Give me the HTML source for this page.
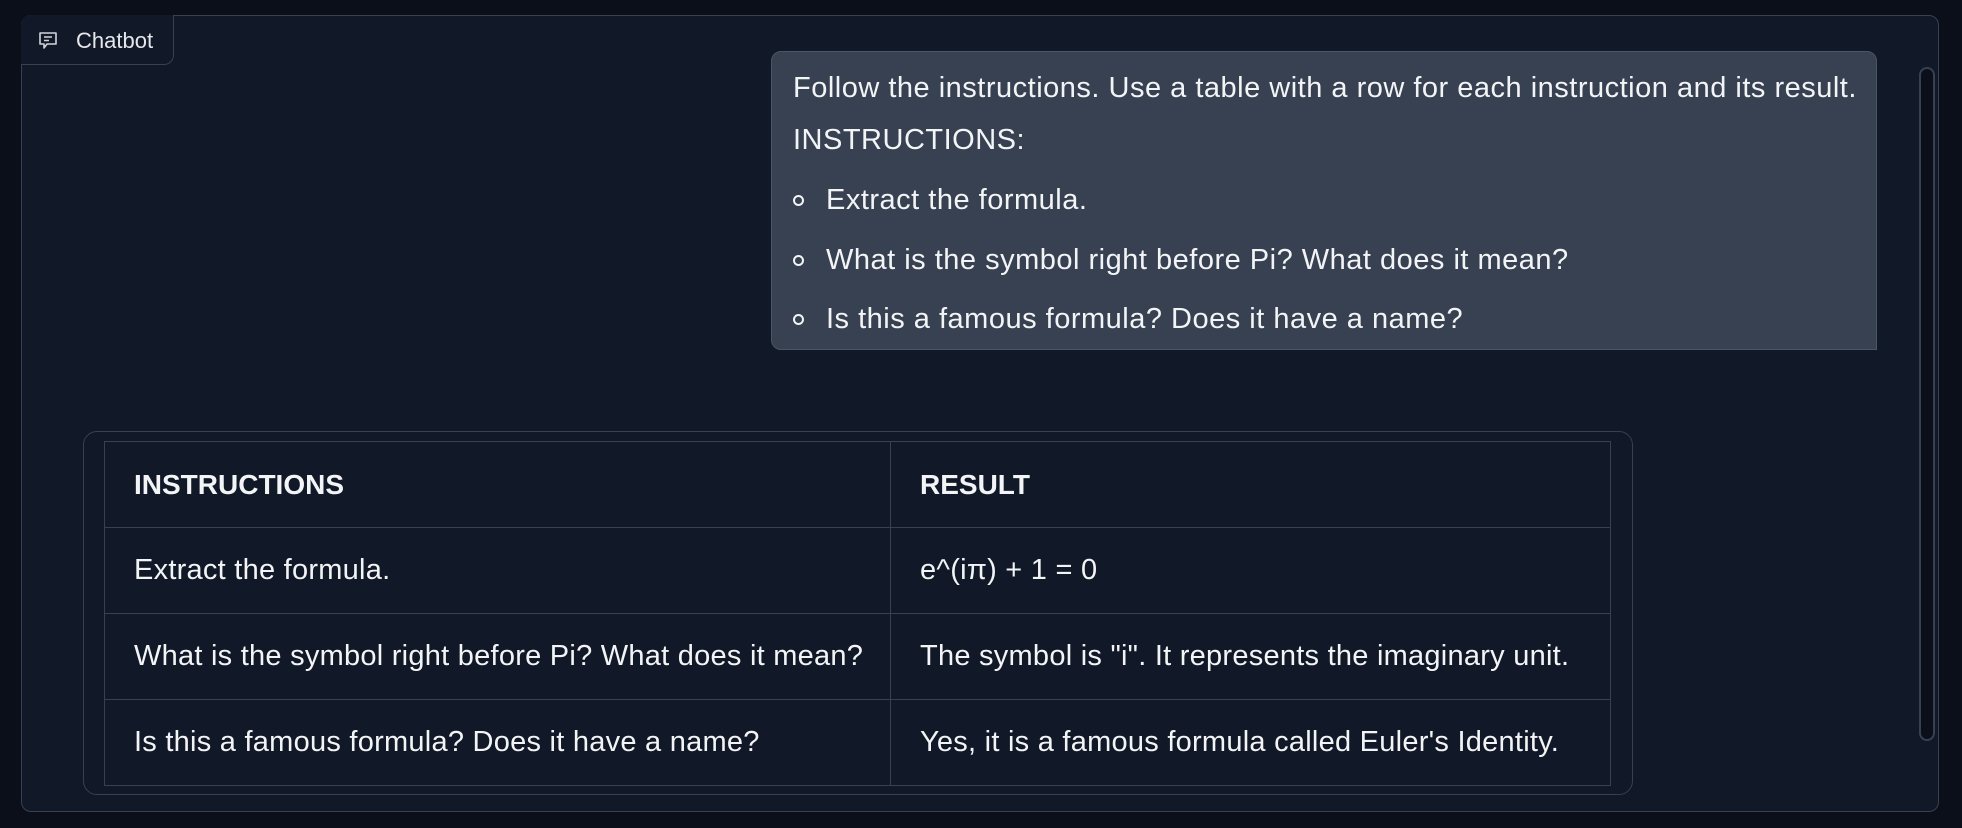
<!DOCTYPE html>
<html><head><meta charset="utf-8"><style>
*{box-sizing:border-box;margin:0;padding:0}
html,body{width:1962px;height:828px;background:#0b0f19;overflow:hidden;font-family:"Liberation Sans",sans-serif;color:#f3f4f6}
.panel{position:absolute;left:21px;top:15px;width:1918px;height:797px;background:#111827;border:1.5px solid #374151;border-radius:10px}
.label{position:absolute;left:21px;top:15px;width:153px;height:50px;border:1.5px solid #374151;border-top:none;border-left:none;border-radius:10px 0 10px 0;background:#111827}
.label svg{position:absolute;left:17px;top:17px}
.label span{position:absolute;left:55px;top:13px;font-size:22px;color:#e5e7eb}
.bubble{position:absolute;left:771px;top:51px;width:1106px;height:299px;background:#374151;border:1.5px solid #4b5563;border-radius:10px 10px 0 10px;font-size:29px;letter-spacing:0.5px;white-space:nowrap}
.bubble .l{position:absolute;left:21px;line-height:1}
.dot{position:absolute;left:21px;width:11px;height:11px;border:2px solid #f3f4f6;border-radius:50%}
.wrap{position:absolute;left:83px;top:431px;width:1550px;height:364px;border:1.5px solid #374151;border-radius:14px}
table{position:absolute;left:104px;top:441px;width:1507px;border-collapse:collapse;table-layout:fixed;font-size:29px;letter-spacing:0.25px;white-space:nowrap}
td,th{border:1.5px solid #374151;height:86px;padding:0 0 0 29px;text-align:left;vertical-align:middle;overflow:hidden}
th{font-weight:bold;letter-spacing:0;font-size:28px}
col.a{width:786px}
.sb{position:absolute;left:1919px;top:67px;width:16px;height:674px;border:2px solid #374151;border-radius:8px;background:#0b0f19}
</style></head><body>
<div class="panel"></div>
<div class="label"><svg width="20" height="17" viewBox="0 0 20 17" fill="none" stroke="#d1d5db" stroke-width="1.6"><path d="M2 1h16v11H9l-3 4v-4H2z" stroke-linejoin="round"/><path d="M6 5h8M6 8.5h5"/></svg><span>Chatbot</span></div>
<div class="bubble">
<div class="l" style="top:22px">Follow the instructions. Use a table with a row for each instruction and its result.</div>
<div class="l" style="top:74px">INSTRUCTIONS:</div>
<div class="dot" style="top:143px"></div><div class="l" style="left:54px;top:134px">Extract the formula.</div>
<div class="dot" style="top:203px"></div><div class="l" style="left:54px;top:194px">What is the symbol right before Pi? What does it mean?</div>
<div class="dot" style="top:262px"></div><div class="l" style="left:54px;top:253px">Is this a famous formula? Does it have a name?</div>
</div>
<div class="wrap"></div>
<table>
<colgroup><col class="a"><col></colgroup>
<tr><th>INSTRUCTIONS</th><th>RESULT</th></tr>
<tr><td>Extract the formula.</td><td>e^(iπ) + 1 = 0</td></tr>
<tr><td>What is the symbol right before Pi? What does it mean?</td><td>The symbol is "i". It represents the imaginary unit.</td></tr>
<tr><td>Is this a famous formula? Does it have a name?</td><td>Yes, it is a famous formula called Euler's Identity.</td></tr>
</table>
<div class="sb"></div>
</body></html>
